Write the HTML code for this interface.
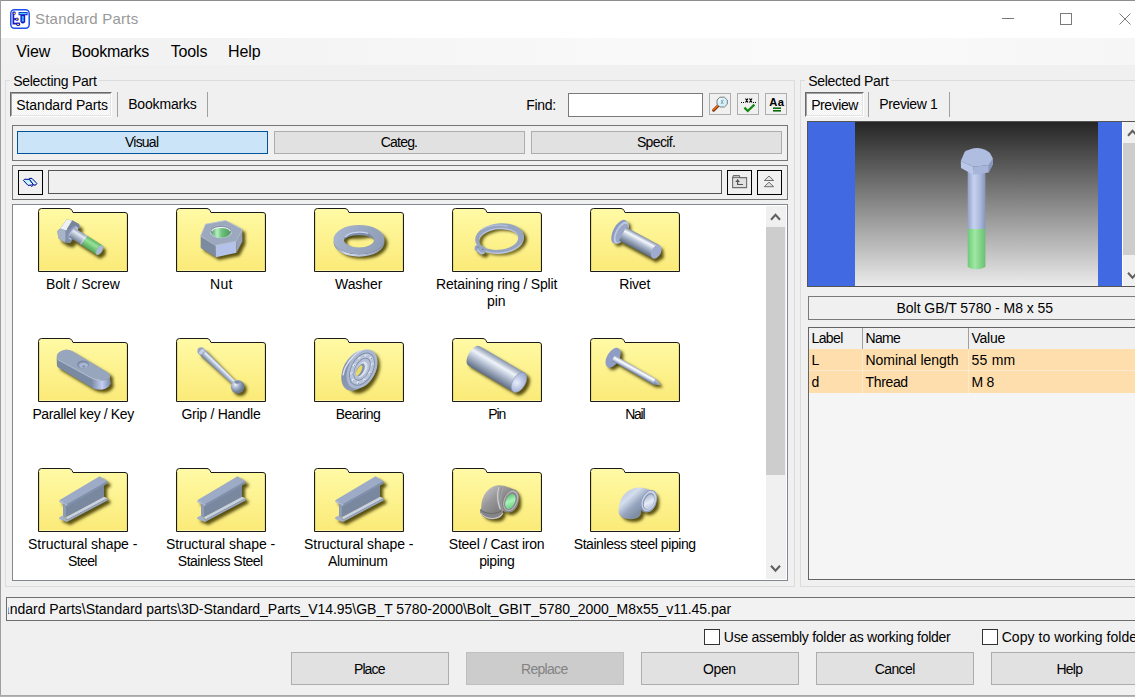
<!DOCTYPE html>
<html><head><meta charset="utf-8"><title>Standard Parts</title>
<style>
html,body{margin:0;padding:0;background:#f0f0f0;overflow:hidden}
body{font-family:"Liberation Sans",sans-serif;width:1135px;height:697px;position:relative}
#w{position:absolute;left:0;top:0;width:1135px;height:697px;overflow:hidden;background:#f0f0f0}
#w div,#w span,#w svg{position:absolute;box-sizing:border-box}
#w span{white-space:pre}

</style></head>
<body>
<div id="w">
<div style="left:0px;top:0px;width:1135px;height:38px;background:#fff"></div>
<div style="left:0px;top:38px;width:1135px;height:27px;background:linear-gradient(90deg,#f1f1f1 0%,#f3f3f3 20%,#f9f9f9 55%,#fafafa 75%,#f6f6f6 100%)"></div>
<div style="left:0px;top:0px;width:1135px;height:1px;background:#8e8e8e"></div>
<div style="left:0px;top:0px;width:1px;height:697px;background:#9e9e9e"></div>
<div style="left:0px;top:695px;width:1135px;height:1px;background:#a8a8a8"></div>
<div style="left:0px;top:696px;width:1135px;height:1px;background:#b4b4b4"></div>
<div style="left:1002px;top:18px;width:12px;height:1px;background:#7a7a7a"></div>
<div style="left:1060px;top:13px;width:12px;height:12px;border:1px solid #7a7a7a"></div>
<svg style="left:1118px;top:12px" width="14" height="14" viewBox="0 0 14 14"><path d="M1.5 1.5 L12.5 12.5 M12.5 1.5 L1.5 12.5" stroke="#7a7a7a" stroke-width="1" fill="none"/></svg>
<div style="left:5px;top:80px;width:790px;height:507px;border:1px solid #dcdcdc"></div>
<div style="left:10px;top:72px;width:89px;height:16px;background:#f0f0f0"></div>
<div style="left:800px;top:80px;width:345px;height:507px;border:1px solid #dcdcdc"></div>
<div style="left:805px;top:72px;width:86px;height:16px;background:#f0f0f0"></div>
<div style="left:10px;top:92px;width:102px;height:25px;border:1px solid;border-color:#696969 #fff #fff #696969;background:repeating-conic-gradient(#ffffff 0% 25%,#f0f0f0 0% 50%) 0 0/2px 2px"></div>
<div style="left:11px;top:93px;width:100px;height:23px;border:1px solid;border-color:#a0a0a0 #e3e3e3 #e3e3e3 #a0a0a0"></div>
<div style="left:117px;top:92px;width:1px;height:25px;background:#a0a0a0"></div>
<div style="left:207px;top:92px;width:1px;height:25px;background:#a0a0a0"></div>
<div style="left:568px;top:93px;width:135px;height:24px;border:1px solid #7a7a7a;background:#fff"></div>
<div style="left:709px;top:93px;width:22px;height:22px;border:1px solid #adadad;background:#f0f0f0"></div>
<div style="left:737px;top:93px;width:22px;height:22px;border:1px solid #adadad;background:#f0f0f0"></div>
<div style="left:765px;top:93px;width:22px;height:22px;border:1px solid #adadad;background:#f0f0f0"></div>
<div style="left:12px;top:125px;width:776px;height:36px;border:1px solid #767676"></div>
<div style="left:17px;top:131px;width:251px;height:23px;border:1px solid #005499;background:#cce4f7"></div>
<div style="left:274px;top:131px;width:251px;height:23px;border:1px solid #adadad;background:#e1e1e1"></div>
<div style="left:531px;top:131px;width:251px;height:23px;border:1px solid #adadad;background:#e1e1e1"></div>
<div style="left:12px;top:165px;width:776px;height:35px;border:1px solid #767676"></div>
<div style="left:18px;top:170px;width:25px;height:25px;border:1px solid #000"></div>
<div style="left:48px;top:170px;width:674px;height:24px;border:1px solid #555"></div>
<div style="left:727px;top:170px;width:25px;height:25px;border:1px solid #000"></div>
<div style="left:757px;top:170px;width:25px;height:25px;border:1px solid #000"></div>
<div style="left:12px;top:204px;width:776px;height:377px;border:1px solid #828790;background:#fff"></div>
<div style="left:766px;top:206px;width:20px;height:373px;background:#f0f0f0"></div>
<div style="left:766px;top:227px;width:19px;height:248px;background:#cdcdcd"></div>
<svg style="left:766px;top:206px" width="20" height="21" viewBox="0 0 20 21"><path d="M5 13.7 L9.5 8.8 L14 13.7" stroke="#606060" stroke-width="2.1" fill="none"/></svg>
<svg style="left:766px;top:558px" width="20" height="21" viewBox="0 0 20 21"><path d="M5 7.8 L9.5 12.7 L14 7.8" stroke="#606060" stroke-width="2.1" fill="none"/></svg>
<svg style="left:0;top:0" width="0" height="0"><defs><filter id="shd" x="-30%" y="-30%" width="160%" height="160%"><feGaussianBlur stdDeviation="17"/></filter><linearGradient id="fg" x1="0" y1="0" x2="0" y2="1"><stop offset="0" stop-color="#fffaa6"/><stop offset="0.5" stop-color="#fdf28e"/><stop offset="1" stop-color="#fbea78"/></linearGradient></defs></svg>
<svg style="left:37px;top:207px" width="92" height="66" viewBox="0 0 92 66"><path d="M1.5 64.5 L1.5 4.5 Q1.5 1.5 4.5 1.5 L32 1.5 Q34 1.5 35 3.5 L36 5.5 L88 5.5 Q90.5 5.5 90.5 8 L90.5 64.5 Z" fill="url(#fg)" stroke="#1a1a1a" stroke-width="1"/><path d="M2.5 63 V5" stroke="#d9c95a" stroke-opacity="0.55" fill="none"/><path d="M89.5 63 V8" stroke="#d9c95a" stroke-opacity="0.45" fill="none"/><path d="M3 63.5 H89" stroke="#fff8b0" stroke-opacity="0.8" fill="none"/><g transform="translate(-1 -3) scale(0.10334)"><defs><linearGradient id="b1" gradientUnits="userSpaceOnUse" x1="373" y1="231" x2="317" y2="319"><stop offset="0" stop-color="#8e9cb4"/><stop offset="0.3" stop-color="#e4ebf4"/><stop offset="0.45" stop-color="#c3cede"/><stop offset="1" stop-color="#6f7d93"/></linearGradient><linearGradient id="b2" gradientUnits="userSpaceOnUse" x1="373" y1="231" x2="317" y2="319"><stop offset="0" stop-color="#62b866"/><stop offset="0.35" stop-color="#96e29a"/><stop offset="1" stop-color="#4fa455"/></linearGradient></defs><path d="M207 262 L235 235 L297 149 L350 158 L418 195 L420 235 L395 255 L350 300 L355 345 L330 380 L275 372 L215 330 Z M373 231 L643 401 L637 459 L587 489 L317 319 Z" transform="translate(34 40)" fill="#453b00" fill-opacity="0.88" filter="url(#shd)"/><path d="M207 262 L235 235 L297 149 L350 158 L418 195 L420 235 L395 255 L350 300 L355 345 L330 380 L275 372 L215 330 Z" fill="#7f8da6"/><path d="M207 262 L235 238 L285 262 L285 345 L275 372 L215 330 Z" fill="#a7b3c6"/><path d="M235 238 L297 150 L352 160 L292 256 Z" fill="#eef2f6"/><path d="M352 160 L418 195 L420 235 L395 255 L300 240 Z" fill="#76849c"/><ellipse cx="350" cy="275" rx="34" ry="80" transform="rotate(32.2 350 275)" fill="#8794b6"/><ellipse cx="362" cy="282" rx="30" ry="70" transform="rotate(32.2 362 282)" fill="#b9c4dc"/><path d="M373 231 L643 401 L587 489 L317 319 Z" fill="url(#b1)"/><path d="M506 315 L643 401 L587 489 L450 403 A14 52 32.1 0 1 506 315 Z" fill="url(#b2)"/><path d="M486 303 L430 391" stroke="#e6ecf4" stroke-width="12" stroke-opacity="0.45"/><ellipse cx="615" cy="445" rx="26" ry="52" transform="rotate(32.2 615 445)" fill="#aeb9d8" stroke="#7fbf86" stroke-width="6"/></g></svg>
<svg style="left:175px;top:207px" width="92" height="66" viewBox="0 0 92 66"><path d="M1.5 64.5 L1.5 4.5 Q1.5 1.5 4.5 1.5 L32 1.5 Q34 1.5 35 3.5 L36 5.5 L88 5.5 Q90.5 5.5 90.5 8 L90.5 64.5 Z" fill="url(#fg)" stroke="#1a1a1a" stroke-width="1"/><path d="M2.5 63 V5" stroke="#d9c95a" stroke-opacity="0.55" fill="none"/><path d="M89.5 63 V8" stroke="#d9c95a" stroke-opacity="0.45" fill="none"/><path d="M3 63.5 H89" stroke="#fff8b0" stroke-opacity="0.8" fill="none"/><g transform="translate(-1 -3) scale(0.10334)"><defs><linearGradient id="n1" gradientUnits="userSpaceOnUse" x1="360" y1="280" x2="550" y2="280"><stop offset="0" stop-color="#4f9a5e"/><stop offset="0.3" stop-color="#b6f0c0"/><stop offset="0.55" stop-color="#6cc07c"/><stop offset="1" stop-color="#4f9a5e"/></linearGradient></defs><path d="M305 195 L500 160 L660 245 L662 360 L605 472 L405 515 L258 425 L258 310 Z" transform="translate(30 28)" fill="#453b00" fill-opacity="0.88" filter="url(#shd)"/><path d="M305 195 L500 160 L660 245 L600 360 L400 400 L258 310 Z" fill="#9ba8bd"/><path d="M258 310 L400 400 L405 515 L258 425 Z" fill="#7d8ba0"/><path d="M400 400 L600 360 L605 472 L405 515 Z" fill="#b4c1e8"/><path d="M600 360 L660 245 L662 360 L605 472 Z" fill="#95a2ba"/><path d="M305 195 L500 160 L660 245 L600 360 L400 400 L258 310 Z" fill="none" stroke="#b8c3d6" stroke-width="8"/><ellipse cx="455" cy="268" rx="108" ry="64" fill="#c9d1de"/><ellipse cx="455" cy="262" rx="104" ry="56" fill="#8794aa"/><ellipse cx="455" cy="276" rx="90" ry="50" fill="url(#n1)"/><path d="M365 262 A 92 44 0 0 1 545 262" fill="none" stroke="#f4f7fa" stroke-width="10"/></g></svg>
<svg style="left:313px;top:207px" width="92" height="66" viewBox="0 0 92 66"><path d="M1.5 64.5 L1.5 4.5 Q1.5 1.5 4.5 1.5 L32 1.5 Q34 1.5 35 3.5 L36 5.5 L88 5.5 Q90.5 5.5 90.5 8 L90.5 64.5 Z" fill="url(#fg)" stroke="#1a1a1a" stroke-width="1"/><path d="M2.5 63 V5" stroke="#d9c95a" stroke-opacity="0.55" fill="none"/><path d="M89.5 63 V8" stroke="#d9c95a" stroke-opacity="0.45" fill="none"/><path d="M3 63.5 H89" stroke="#fff8b0" stroke-opacity="0.8" fill="none"/><g transform="translate(-1 -3) scale(0.10334)"><defs><linearGradient id="w1" gradientUnits="userSpaceOnUse" x1="208" y1="0" x2="702" y2="0"><stop offset="0" stop-color="#7f8da6"/><stop offset="0.25" stop-color="#d3dcf2"/><stop offset="0.6" stop-color="#b1bedc"/><stop offset="1" stop-color="#8896b0"/></linearGradient><linearGradient id="w2" gradientUnits="userSpaceOnUse" x1="208" y1="250" x2="702" y2="450"><stop offset="0" stop-color="#a9b6d0"/><stop offset="0.5" stop-color="#99a7c0"/><stop offset="1" stop-color="#8e9cb6"/></linearGradient></defs><path d="M208 355 A247 148 0 1 1 702 355 A247 148 0 1 1 208 355 Z M310 350 A145 72 0 1 0 600 350 A145 72 0 1 0 310 350 Z" transform="translate(30 28)" fill="#453b00" fill-opacity="0.88" fill-rule="evenodd" filter="url(#shd)"/><clipPath id="whc"><ellipse cx="455" cy="348" rx="145" ry="72"/></clipPath><g clip-path="url(#whc)"><ellipse cx="440" cy="290" rx="170" ry="50" fill="#3a3100" fill-opacity="0.75" filter="url(#shd)"/></g><path d="M208 345 A247 142 0 1 0 702 345 L702 368 A247 142 0 0 1 208 368 Z" fill="url(#w1)"/><path d="M208 345 A247 142 0 1 1 702 345 A247 142 0 1 1 208 345 Z M310 348 A145 72 0 1 0 600 348 A145 72 0 1 0 310 348 Z" fill="url(#w2)" fill-rule="evenodd"/><path d="M310 348 A145 72 0 0 1 600 348 A150 62 0 0 0 310 348 Z" fill="#7f8ea8"/><path d="M322 322 A140 62 0 0 1 540 284" fill="none" stroke="#c9d4f0" stroke-width="12"/></g></svg>
<svg style="left:451px;top:207px" width="92" height="66" viewBox="0 0 92 66"><path d="M1.5 64.5 L1.5 4.5 Q1.5 1.5 4.5 1.5 L32 1.5 Q34 1.5 35 3.5 L36 5.5 L88 5.5 Q90.5 5.5 90.5 8 L90.5 64.5 Z" fill="url(#fg)" stroke="#1a1a1a" stroke-width="1"/><path d="M2.5 63 V5" stroke="#d9c95a" stroke-opacity="0.55" fill="none"/><path d="M89.5 63 V8" stroke="#d9c95a" stroke-opacity="0.45" fill="none"/><path d="M3 63.5 H89" stroke="#fff8b0" stroke-opacity="0.8" fill="none"/><g transform="translate(-1 -3) scale(0.10334)"><path d="M245 335 A235 140 -5 1 1 715 320 A235 140 -5 1 1 245 335 Z M282 345 A190 100 -5 1 0 660 330 A190 100 -5 1 0 282 345 Z M240 420 Q235 400 262 398 L300 405 L345 420 L350 455 L330 485 L300 490 L262 462 L238 445 Z" transform="translate(30 28)" fill="#453b00" fill-opacity="0.88" fill-rule="evenodd" filter="url(#shd)"/><path d="M245 335 A235 140 -5 1 1 715 320 A235 140 -5 1 1 245 335 Z M282 345 A190 100 -5 1 0 660 330 A190 100 -5 1 0 282 345 Z" transform="translate(0 14)" fill="#b7c4e4" fill-rule="evenodd"/><path d="M245 335 A235 140 -5 1 1 715 320 A235 140 -5 1 1 245 335 Z M282 345 A190 100 -5 1 0 660 330 A190 100 -5 1 0 282 345 Z" fill="#97a5bf" fill-rule="evenodd"/><path d="M240 420 Q235 400 262 398 L300 405 L345 420 L350 455 L330 485 L300 490 L262 462 L238 445 Z" fill="#97a5bf"/><path d="M262 440 L300 478 L330 472" fill="none" stroke="#b7c4e4" stroke-width="12"/><path d="M300 250 A200 110 -5 0 1 560 215" fill="none" stroke="#c4cfea" stroke-width="8"/><circle cx="272" cy="418" r="7" fill="#6f7c94"/><circle cx="318" cy="440" r="7" fill="#6f7c94"/></g></svg>
<svg style="left:589px;top:207px" width="92" height="66" viewBox="0 0 92 66"><path d="M1.5 64.5 L1.5 4.5 Q1.5 1.5 4.5 1.5 L32 1.5 Q34 1.5 35 3.5 L36 5.5 L88 5.5 Q90.5 5.5 90.5 8 L90.5 64.5 Z" fill="url(#fg)" stroke="#1a1a1a" stroke-width="1"/><path d="M2.5 63 V5" stroke="#d9c95a" stroke-opacity="0.55" fill="none"/><path d="M89.5 63 V8" stroke="#d9c95a" stroke-opacity="0.45" fill="none"/><path d="M3 63.5 H89" stroke="#fff8b0" stroke-opacity="0.8" fill="none"/><g transform="translate(-1 -3) scale(0.10334)"><defs><linearGradient id="r1" gradientUnits="userSpaceOnUse" x1="369" y1="226" x2="301" y2="354"><stop offset="0" stop-color="#7f8da6"/><stop offset="0.25" stop-color="#f6f9fd"/><stop offset="0.5" stop-color="#b6c2d6"/><stop offset="1" stop-color="#5d6b82"/></linearGradient></defs><path d="M369 226 L694 398 L700 483 L626 526 L301 354 Z" transform="translate(34 40)" fill="#453b00" fill-opacity="0.88" filter="url(#shd)"/><ellipse cx="338" cy="296" rx="62" ry="125" transform="rotate(27.9 338 296)" fill="#453b00" fill-opacity="0.88" filter="url(#shd)"/><ellipse cx="305" cy="268" rx="62" ry="125" transform="rotate(27.9 305 268)" fill="#8d9bc0"/><ellipse cx="322" cy="278" rx="55" ry="118" transform="rotate(27.9 322 278)" fill="#bdc8e4"/><ellipse cx="330" cy="283" rx="48" ry="100" transform="rotate(27.9 330 283)" fill="#9aa7c6"/><path d="M369 226 L694 398 L626 526 L301 354 Z" fill="url(#r1)"/><ellipse cx="660" cy="462" rx="45" ry="72" transform="rotate(27.9 660 462)" fill="#9fabd0"/></g></svg>
<svg style="left:37px;top:337px" width="92" height="66" viewBox="0 0 92 66"><path d="M1.5 64.5 L1.5 4.5 Q1.5 1.5 4.5 1.5 L32 1.5 Q34 1.5 35 3.5 L36 5.5 L88 5.5 Q90.5 5.5 90.5 8 L90.5 64.5 Z" fill="url(#fg)" stroke="#1a1a1a" stroke-width="1"/><path d="M2.5 63 V5" stroke="#d9c95a" stroke-opacity="0.55" fill="none"/><path d="M89.5 63 V8" stroke="#d9c95a" stroke-opacity="0.45" fill="none"/><path d="M3 63.5 H89" stroke="#fff8b0" stroke-opacity="0.8" fill="none"/><g transform="translate(-1 -3) scale(0.10334)"><defs><linearGradient id="k1" gradientUnits="userSpaceOnUse" x1="540" y1="0" x2="722" y2="0"><stop offset="0" stop-color="#7d8ca6"/><stop offset="0.55" stop-color="#c3d0f4"/><stop offset="0.8" stop-color="#9aa8cc"/><stop offset="1" stop-color="#7686a2"/></linearGradient></defs><path d="M200 215 Q205 165 290 150 Q330 150 350 165 L700 375 Q725 395 715 425 L722 480 Q700 530 640 537 Q580 540 545 522 L215 325 Q200 315 202 295 Z" transform="translate(30 28)" fill="#453b00" fill-opacity="0.88" filter="url(#shd)"/><path d="M200 215 Q198 238 215 250 L540 428 Q560 440 620 447 Q690 450 715 425 L722 480 Q700 530 640 537 Q580 540 545 522 L215 325 Q200 315 202 295 Z" fill="#7b8aa3"/><path d="M540 428 Q560 440 620 447 Q690 450 715 425 L722 480 Q700 530 640 537 Q580 540 545 522 Z" fill="url(#k1)"/><path d="M200 215 Q205 165 290 150 Q330 150 350 165 L700 375 Q725 395 715 425 Q690 450 620 447 Q560 440 540 428 L215 250 Q198 238 200 215 Z" fill="#97a5bd"/><path d="M215 250 L540 428 Q560 440 620 447" fill="none" stroke="#c9d3e6" stroke-width="7"/><ellipse cx="455" cy="297" rx="58" ry="38" fill="#8492ac"/><ellipse cx="460" cy="305" rx="42" ry="26" fill="#a9b6d4"/><path d="M400 290 A58 38 0 0 1 510 285" fill="none" stroke="#6f7d96" stroke-width="6"/><ellipse cx="462" cy="315" rx="16" ry="9" fill="#7f8da8"/></g></svg>
<svg style="left:175px;top:337px" width="92" height="66" viewBox="0 0 92 66"><path d="M1.5 64.5 L1.5 4.5 Q1.5 1.5 4.5 1.5 L32 1.5 Q34 1.5 35 3.5 L36 5.5 L88 5.5 Q90.5 5.5 90.5 8 L90.5 64.5 Z" fill="url(#fg)" stroke="#1a1a1a" stroke-width="1"/><path d="M2.5 63 V5" stroke="#d9c95a" stroke-opacity="0.55" fill="none"/><path d="M89.5 63 V8" stroke="#d9c95a" stroke-opacity="0.45" fill="none"/><path d="M3 63.5 H89" stroke="#fff8b0" stroke-opacity="0.8" fill="none"/><g transform="translate(-1 -3) scale(0.10334)"><defs><linearGradient id="h1" gradientUnits="userSpaceOnUse" x1="287" y1="139" x2="237" y2="191"><stop offset="0" stop-color="#7f8da6"/><stop offset="0.3" stop-color="#e9f0fa"/><stop offset="0.55" stop-color="#b3bfd4"/><stop offset="1" stop-color="#69778e"/></linearGradient><radialGradient id="h2" gradientUnits="userSpaceOnUse" cx="595" cy="490" r="75" ><stop offset="0" stop-color="#eef3fb"/><stop offset="0.45" stop-color="#a9b6d0"/><stop offset="1" stop-color="#6d7b94"/></radialGradient></defs><path d="M287 139 L605 464 L575 496 L237 191 Z M680 510 A65 65 0 1 1 550 510 A65 65 0 1 1 680 510 Z" transform="translate(26 26)" fill="#453b00" fill-opacity="0.88" filter="url(#shd)"/><path d="M287 139 L605 464 L575 496 L237 191 Z" fill="url(#h1)"/><circle cx="262" cy="165" r="36" fill="#9aa7c0"/><ellipse cx="268" cy="171" rx="16" ry="34" transform="rotate(43.8 268 171)" fill="#c5d0e4"/><circle cx="615" cy="510" r="66" fill="url(#h2)"/><ellipse cx="612" cy="468" rx="26" ry="14" fill="#7e8ca6"/></g></svg>
<svg style="left:313px;top:337px" width="92" height="66" viewBox="0 0 92 66"><path d="M1.5 64.5 L1.5 4.5 Q1.5 1.5 4.5 1.5 L32 1.5 Q34 1.5 35 3.5 L36 5.5 L88 5.5 Q90.5 5.5 90.5 8 L90.5 64.5 Z" fill="url(#fg)" stroke="#1a1a1a" stroke-width="1"/><path d="M2.5 63 V5" stroke="#d9c95a" stroke-opacity="0.55" fill="none"/><path d="M89.5 63 V8" stroke="#d9c95a" stroke-opacity="0.45" fill="none"/><path d="M3 63.5 H89" stroke="#fff8b0" stroke-opacity="0.8" fill="none"/><g transform="translate(-1 -3) scale(0.10334)"><defs><linearGradient id="be1" gradientUnits="userSpaceOnUse" x1="-210" y1="0" x2="210" y2="0"><stop offset="0" stop-color="#8c9ab4"/><stop offset="0.5" stop-color="#7d8ba5"/><stop offset="1" stop-color="#dfe6f2"/></linearGradient></defs><ellipse cx="470" cy="350" rx="215" ry="135" transform="translate(32 26) rotate(-62 470 350)" fill="#453b00" fill-opacity="0.88" filter="url(#shd)"/><ellipse cx="0" cy="0" rx="212" ry="134" transform="translate(438 352) rotate(-62)" fill="url(#be1)"/><path d="M300 400 Q330 230 520 150" fill="none" stroke="#e3e9f4" stroke-width="14" stroke-opacity="0.9"/><ellipse cx="484" cy="340" rx="204" ry="132" transform="rotate(-62 484 340)" fill="#aab7d0" /><ellipse cx="484" cy="340" rx="172" ry="108" transform="rotate(-62 484 340)" fill="#7f8da8" /><ellipse cx="484" cy="340" rx="162" ry="100" transform="rotate(-62 484 340)" fill="#b9c4da" /><ellipse cx="484" cy="340" rx="120" ry="70" transform="rotate(-62 484 340)" fill="#7a88a2" /><ellipse cx="484" cy="340" rx="112" ry="64" transform="rotate(-62 484 340)" fill="#b4bfd6" /><ellipse cx="482" cy="343" rx="82" ry="46" transform="rotate(-62 482 343)" fill="#d9e0ee" /><ellipse cx="468" cy="348" rx="68" ry="33" transform="rotate(-62 468 348)" fill="#8391ab" /><ellipse cx="456" cy="354" rx="56" ry="20" transform="rotate(-62 456 354)" fill="#e9da63" /><circle cx="569" cy="233" r="14" fill="#dfe6f2"/><circle cx="574" cy="238" r="7" fill="#8b99b3"/><circle cx="584" cy="297" r="14" fill="#dfe6f2"/><circle cx="589" cy="302" r="7" fill="#8b99b3"/><circle cx="560" cy="378" r="14" fill="#dfe6f2"/><circle cx="565" cy="383" r="7" fill="#8b99b3"/><circle cx="507" cy="444" r="14" fill="#dfe6f2"/><circle cx="512" cy="449" r="7" fill="#8b99b3"/><circle cx="446" cy="471" r="14" fill="#dfe6f2"/><circle cx="451" cy="476" r="7" fill="#8b99b3"/><circle cx="399" cy="447" r="14" fill="#dfe6f2"/><circle cx="404" cy="452" r="7" fill="#8b99b3"/><circle cx="384" cy="383" r="14" fill="#dfe6f2"/><circle cx="389" cy="388" r="7" fill="#8b99b3"/><circle cx="408" cy="302" r="14" fill="#dfe6f2"/><circle cx="413" cy="307" r="7" fill="#8b99b3"/><circle cx="461" cy="236" r="14" fill="#dfe6f2"/><circle cx="466" cy="241" r="7" fill="#8b99b3"/><circle cx="522" cy="209" r="14" fill="#dfe6f2"/><circle cx="527" cy="214" r="7" fill="#8b99b3"/></g></svg>
<svg style="left:451px;top:337px" width="92" height="66" viewBox="0 0 92 66"><path d="M1.5 64.5 L1.5 4.5 Q1.5 1.5 4.5 1.5 L32 1.5 Q34 1.5 35 3.5 L36 5.5 L88 5.5 Q90.5 5.5 90.5 8 L90.5 64.5 Z" fill="url(#fg)" stroke="#1a1a1a" stroke-width="1"/><path d="M2.5 63 V5" stroke="#d9c95a" stroke-opacity="0.55" fill="none"/><path d="M89.5 63 V8" stroke="#d9c95a" stroke-opacity="0.45" fill="none"/><path d="M3 63.5 H89" stroke="#fff8b0" stroke-opacity="0.8" fill="none"/><g transform="translate(-1 -3) scale(0.10334)"><defs><linearGradient id="p1" gradientUnits="userSpaceOnUse" x1="287" y1="119" x2="177" y2="305"><stop offset="0" stop-color="#8795ad"/><stop offset="0.3" stop-color="#f0f4fa"/><stop offset="0.55" stop-color="#b9c4d6"/><stop offset="1" stop-color="#5f6d84"/></linearGradient><radialGradient id="p2" gradientUnits="userSpaceOnUse" cx="650" cy="480" r="120" ><stop offset="0" stop-color="#e8eeff"/><stop offset="1" stop-color="#93a1c8"/></radialGradient></defs><path d="M287 119 L723 375 A60 108 30.4 0 1 613 561 L177 305 A60 108 30.4 0 1 287 119 Z" transform="translate(32 30)" fill="#453b00" fill-opacity="0.88" filter="url(#shd)"/><path d="M287 119 L723 375 L613 561 L177 305 A55 108 30.4 0 1 287 119 Z" fill="url(#p1)"/><ellipse cx="668" cy="468" rx="62" ry="108" transform="rotate(30.4 668 468)" fill="url(#p2)" stroke="#7e8caa" stroke-width="4"/></g></svg>
<svg style="left:589px;top:337px" width="92" height="66" viewBox="0 0 92 66"><path d="M1.5 64.5 L1.5 4.5 Q1.5 1.5 4.5 1.5 L32 1.5 Q34 1.5 35 3.5 L36 5.5 L88 5.5 Q90.5 5.5 90.5 8 L90.5 64.5 Z" fill="url(#fg)" stroke="#1a1a1a" stroke-width="1"/><path d="M2.5 63 V5" stroke="#d9c95a" stroke-opacity="0.55" fill="none"/><path d="M89.5 63 V8" stroke="#d9c95a" stroke-opacity="0.45" fill="none"/><path d="M3 63.5 H89" stroke="#fff8b0" stroke-opacity="0.8" fill="none"/><g transform="translate(-1 -3) scale(0.10334)"><defs><linearGradient id="na1" gradientUnits="userSpaceOnUse" x1="260" y1="205" x2="230" y2="259"><stop offset="0" stop-color="#95a3be"/><stop offset="0.4" stop-color="#ffffff"/><stop offset="0.7" stop-color="#c4cfe4"/><stop offset="1" stop-color="#7383a0"/></linearGradient></defs><path d="M260 205 L655 433 L698 490 L625 487 L230 259 Z" transform="translate(28 28)" fill="#453b00" fill-opacity="0.88" filter="url(#shd)"/><ellipse cx="270" cy="255" rx="60" ry="105" transform="rotate(30.0 270 255)" fill="#453b00" fill-opacity="0.88" filter="url(#shd)"/><ellipse cx="243" cy="230" rx="60" ry="105" transform="rotate(30.0 243 230)" fill="#8f9dc6"/><path d="M260 205 L655 433 L698 490 L625 487 L230 259 Z" fill="url(#na1)"/><path d="M655 433 L698 490 L625 487 Z" fill="#8595b8"/><path d="M655 433 L698 490 L640 460 Z" fill="#a9b6d6"/></g></svg>
<svg style="left:37px;top:467px" width="92" height="66" viewBox="0 0 92 66"><path d="M1.5 64.5 L1.5 4.5 Q1.5 1.5 4.5 1.5 L32 1.5 Q34 1.5 35 3.5 L36 5.5 L88 5.5 Q90.5 5.5 90.5 8 L90.5 64.5 Z" fill="url(#fg)" stroke="#1a1a1a" stroke-width="1"/><path d="M2.5 63 V5" stroke="#d9c95a" stroke-opacity="0.55" fill="none"/><path d="M89.5 63 V8" stroke="#d9c95a" stroke-opacity="0.45" fill="none"/><path d="M3 63.5 H89" stroke="#fff8b0" stroke-opacity="0.8" fill="none"/><g transform="translate(-1 -3) scale(0.10334)"><path d="M225 350 L615 118 L693 168 L693 188 L658 210 L658 310 L692 332 L692 352 L300 562 L225 532 L225 515 L262 500 L262 385 L225 368 Z" transform="translate(30 28)" fill="#453b00" fill-opacity="0.88" filter="url(#shd)"/><path d="M262 375 L658 185 L658 320 L290 514 L262 512 Z" fill="#7a889f"/><path d="M290 514 L658 318 L692 332 L300 540 Z" fill="#c9d2e2"/><path d="M225 515 L262 498 L300 540 L300 562 L225 532 Z" fill="#a3b1cc"/><path d="M300 540 L692 332 L692 352 L300 562 Z" fill="#98a6c0"/><path d="M225 350 L615 118 L693 168 L305 388 Z" fill="#9dabc6"/><path d="M225 350 L305 388 L305 408 L225 368 Z" fill="#aab8d6"/><path d="M305 388 L693 168 L693 188 L305 408 Z" fill="#8291ab"/><path d="M262 385 L290 400 L290 515 L262 500 Z" fill="#8e9cb6"/></g></svg>
<svg style="left:175px;top:467px" width="92" height="66" viewBox="0 0 92 66"><path d="M1.5 64.5 L1.5 4.5 Q1.5 1.5 4.5 1.5 L32 1.5 Q34 1.5 35 3.5 L36 5.5 L88 5.5 Q90.5 5.5 90.5 8 L90.5 64.5 Z" fill="url(#fg)" stroke="#1a1a1a" stroke-width="1"/><path d="M2.5 63 V5" stroke="#d9c95a" stroke-opacity="0.55" fill="none"/><path d="M89.5 63 V8" stroke="#d9c95a" stroke-opacity="0.45" fill="none"/><path d="M3 63.5 H89" stroke="#fff8b0" stroke-opacity="0.8" fill="none"/><g transform="translate(-1 -3) scale(0.10334)"><path d="M225 350 L615 118 L693 168 L693 188 L658 210 L658 310 L692 332 L692 352 L300 562 L225 532 L225 515 L262 500 L262 385 L225 368 Z" transform="translate(30 28)" fill="#453b00" fill-opacity="0.88" filter="url(#shd)"/><path d="M262 375 L658 185 L658 320 L290 514 L262 512 Z" fill="#7a889f"/><path d="M290 514 L658 318 L692 332 L300 540 Z" fill="#c9d2e2"/><path d="M225 515 L262 498 L300 540 L300 562 L225 532 Z" fill="#a3b1cc"/><path d="M300 540 L692 332 L692 352 L300 562 Z" fill="#98a6c0"/><path d="M225 350 L615 118 L693 168 L305 388 Z" fill="#9dabc6"/><path d="M225 350 L305 388 L305 408 L225 368 Z" fill="#aab8d6"/><path d="M305 388 L693 168 L693 188 L305 408 Z" fill="#8291ab"/><path d="M262 385 L290 400 L290 515 L262 500 Z" fill="#8e9cb6"/></g></svg>
<svg style="left:313px;top:467px" width="92" height="66" viewBox="0 0 92 66"><path d="M1.5 64.5 L1.5 4.5 Q1.5 1.5 4.5 1.5 L32 1.5 Q34 1.5 35 3.5 L36 5.5 L88 5.5 Q90.5 5.5 90.5 8 L90.5 64.5 Z" fill="url(#fg)" stroke="#1a1a1a" stroke-width="1"/><path d="M2.5 63 V5" stroke="#d9c95a" stroke-opacity="0.55" fill="none"/><path d="M89.5 63 V8" stroke="#d9c95a" stroke-opacity="0.45" fill="none"/><path d="M3 63.5 H89" stroke="#fff8b0" stroke-opacity="0.8" fill="none"/><g transform="translate(-1 -3) scale(0.10334)"><path d="M225 350 L615 118 L693 168 L693 188 L658 210 L658 310 L692 332 L692 352 L300 562 L225 532 L225 515 L262 500 L262 385 L225 368 Z" transform="translate(30 28)" fill="#453b00" fill-opacity="0.88" filter="url(#shd)"/><path d="M262 375 L658 185 L658 320 L290 514 L262 512 Z" fill="#7a889f"/><path d="M290 514 L658 318 L692 332 L300 540 Z" fill="#c9d2e2"/><path d="M225 515 L262 498 L300 540 L300 562 L225 532 Z" fill="#a3b1cc"/><path d="M300 540 L692 332 L692 352 L300 562 Z" fill="#98a6c0"/><path d="M225 350 L615 118 L693 168 L305 388 Z" fill="#9dabc6"/><path d="M225 350 L305 388 L305 408 L225 368 Z" fill="#aab8d6"/><path d="M305 388 L693 168 L693 188 L305 408 Z" fill="#8291ab"/><path d="M262 385 L290 400 L290 515 L262 500 Z" fill="#8e9cb6"/></g></svg>
<svg style="left:451px;top:467px" width="92" height="66" viewBox="0 0 92 66"><path d="M1.5 64.5 L1.5 4.5 Q1.5 1.5 4.5 1.5 L32 1.5 Q34 1.5 35 3.5 L36 5.5 L88 5.5 Q90.5 5.5 90.5 8 L90.5 64.5 Z" fill="url(#fg)" stroke="#1a1a1a" stroke-width="1"/><path d="M2.5 63 V5" stroke="#d9c95a" stroke-opacity="0.55" fill="none"/><path d="M89.5 63 V8" stroke="#d9c95a" stroke-opacity="0.45" fill="none"/><path d="M3 63.5 H89" stroke="#fff8b0" stroke-opacity="0.8" fill="none"/><g transform="translate(-1 -3) scale(0.10334)"><defs><linearGradient id="es1" gradientUnits="userSpaceOnUse" x1="320" y1="250" x2="560" y2="520"><stop offset="0" stop-color="#c4c4c6"/><stop offset="0.35" stop-color="#98989a"/><stop offset="0.7" stop-color="#7e7e80"/><stop offset="1" stop-color="#a2a2a4"/></linearGradient><linearGradient id="es2" gradientUnits="userSpaceOnUse" x1="520" y1="300" x2="640" y2="420"><stop offset="0" stop-color="#46b060"/><stop offset="0.5" stop-color="#a6f5b6"/><stop offset="1" stop-color="#5fca78"/></linearGradient></defs><path d="M300 450 Q300 330 350 270 Q410 200 480 205 Q560 210 640 265 Q670 310 655 400 Q620 470 560 470 Q520 465 505 440 Q520 500 470 525 Q400 545 330 510 Q290 480 300 450 Z" transform="translate(30 26)" fill="#453b00" fill-opacity="0.88" filter="url(#shd)"/><path d="M300 450 Q300 330 350 270 Q410 200 480 205 Q560 210 640 265 Q670 310 655 400 Q620 470 560 470 Q520 465 505 440 Q520 500 470 525 Q400 545 330 510 Q290 480 300 450 Z" fill="url(#es1)"/><path d="M293 432 Q300 468 400 478 Q480 478 508 436 L514 470 Q500 528 410 537 Q310 528 290 470 Z" fill="#858587"/><path d="M295 436 Q310 470 400 480 Q480 478 508 440" fill="none" stroke="#5e5e60" stroke-width="7"/><path d="M294 472 Q330 522 410 528 Q482 522 512 476" fill="none" stroke="#cfcfd1" stroke-width="10"/><path d="M462 212 Q430 320 476 440 L522 458 Q470 330 522 226 Z" fill="#a3a3a5"/><path d="M472 222 Q444 320 484 432" fill="none" stroke="#d6d6d8" stroke-width="9"/><path d="M500 226 Q462 330 506 446" fill="none" stroke="#7c7c7e" stroke-width="6"/><ellipse cx="588" cy="355" rx="76" ry="114" transform="rotate(22 588 355)" fill="#7e7e80"/><ellipse cx="588" cy="355" rx="68" ry="106" transform="rotate(22 588 355)" fill="#b4b4b7"/><ellipse cx="586" cy="358" rx="56" ry="92" transform="rotate(22 586 358)" fill="#8a8a8d"/><ellipse cx="584" cy="362" rx="44" ry="76" transform="rotate(22 584 362)" fill="url(#es2)"/></g></svg>
<svg style="left:589px;top:467px" width="92" height="66" viewBox="0 0 92 66"><path d="M1.5 64.5 L1.5 4.5 Q1.5 1.5 4.5 1.5 L32 1.5 Q34 1.5 35 3.5 L36 5.5 L88 5.5 Q90.5 5.5 90.5 8 L90.5 64.5 Z" fill="url(#fg)" stroke="#1a1a1a" stroke-width="1"/><path d="M2.5 63 V5" stroke="#d9c95a" stroke-opacity="0.55" fill="none"/><path d="M89.5 63 V8" stroke="#d9c95a" stroke-opacity="0.45" fill="none"/><path d="M3 63.5 H89" stroke="#fff8b0" stroke-opacity="0.8" fill="none"/><g transform="translate(-1 -3) scale(0.10334)"><defs><linearGradient id="ss1" gradientUnits="userSpaceOnUse" x1="320" y1="250" x2="560" y2="520"><stop offset="0" stop-color="#b4c0d8"/><stop offset="0.3" stop-color="#d4deee"/><stop offset="0.55" stop-color="#96a4bd"/><stop offset="0.8" stop-color="#7d8ba2"/><stop offset="1" stop-color="#aebbd4"/></linearGradient><linearGradient id="ss2" gradientUnits="userSpaceOnUse" x1="520" y1="300" x2="640" y2="420"><stop offset="0" stop-color="#9aa8c2"/><stop offset="0.6" stop-color="#e6edf9"/><stop offset="1" stop-color="#b4c1da"/></linearGradient></defs><path d="M296 455 Q296 345 360 285 Q420 228 500 228 Q575 232 645 275 Q670 315 655 400 Q620 470 560 470 Q528 466 512 446 Q524 500 470 525 Q400 548 330 515 Q288 485 296 455 Z" transform="translate(30 26)" fill="#453b00" fill-opacity="0.88" filter="url(#shd)"/><path d="M296 455 Q296 345 360 285 Q420 228 500 228 Q575 232 645 275 Q670 315 655 400 Q620 470 560 470 Q528 466 512 446 Q524 500 470 525 Q400 548 330 515 Q288 485 296 455 Z" fill="url(#ss1)"/><ellipse cx="590" cy="357" rx="74" ry="110" transform="rotate(22 590 357)" fill="#8e9cb8"/><ellipse cx="590" cy="357" rx="66" ry="102" transform="rotate(22 590 357)" fill="#c6d1e8"/><ellipse cx="587" cy="361" rx="50" ry="84" transform="rotate(22 587 361)" fill="#8492ae"/><ellipse cx="590" cy="366" rx="44" ry="76" transform="rotate(22 590 366)" fill="url(#ss2)"/></g></svg>
<div style="left:805px;top:92px;width:59px;height:25px;border:1px solid;border-color:#696969 #fff #fff #696969;background:repeating-conic-gradient(#ffffff 0% 25%,#f0f0f0 0% 50%) 0 0/2px 2px"></div>
<div style="left:806px;top:93px;width:57px;height:23px;border:1px solid;border-color:#a0a0a0 #e3e3e3 #e3e3e3 #a0a0a0"></div>
<div style="left:868px;top:92px;width:1px;height:25px;background:#a0a0a0"></div>
<div style="left:949px;top:92px;width:1px;height:25px;background:#a0a0a0"></div>
<div style="left:807px;top:121px;width:330px;height:166px;background:#fff;border:1px solid #555;border-right:none"></div>
<div style="left:808px;top:122px;width:47px;height:164px;background:#4169e1"></div>
<div style="left:855px;top:122px;width:243px;height:164px;background:linear-gradient(#252525,#ebebeb)"></div>
<div style="left:1098px;top:122px;width:24px;height:164px;background:#4169e1"></div>
<div style="left:1123px;top:122px;width:20px;height:164px;background:#f0f0f0"></div>
<div style="left:1123px;top:143px;width:20px;height:112px;background:#cdcdcd"></div>
<svg style="left:1123px;top:122px" width="20" height="21" viewBox="0 0 20 21"><path d="M5 13.7 L9.5 8.8 L14 13.7" stroke="#606060" stroke-width="2.1" fill="none"/></svg>
<svg style="left:1123px;top:265px" width="20" height="21" viewBox="0 0 20 21"><path d="M5 7.8 L9.5 12.7 L14 7.8" stroke="#606060" stroke-width="2.1" fill="none"/></svg>
<div style="left:808px;top:296px;width:340px;height:24px;border:1px solid #7a7a7a;background:#f0f0f0"></div>
<div style="left:808px;top:327px;width:340px;height:253px;border:1px solid #646464;background:#f5f5f5"></div>
<div style="left:809px;top:328px;width:339px;height:21px;background:#f0f0f0"></div>
<div style="left:862px;top:328px;width:1px;height:21px;background:#a0a0a0"></div>
<div style="left:968px;top:328px;width:1px;height:21px;background:#a0a0a0"></div>
<div style="left:809px;top:349px;width:339px;height:22px;background:#ffdead"></div>
<div style="left:809px;top:371px;width:339px;height:22px;background:#ffdead"></div>
<div style="left:809px;top:370px;width:339px;height:1px;background:#fbe9d0"></div>
<div style="left:862px;top:349px;width:1px;height:44px;background:#fbe9d0"></div>
<div style="left:968px;top:349px;width:1px;height:44px;background:#fbe9d0"></div>
<div style="left:6px;top:597px;width:1140px;height:24px;border:1px solid #6e6e6e;background:#f2f2f2"></div>
<div style="left:704px;top:629px;width:16px;height:16px;border:1px solid #333;background:#fff"></div>
<div style="left:982px;top:629px;width:16px;height:16px;border:1px solid #333;background:#fff"></div>
<div style="left:291px;top:652px;width:158px;height:33px;border:1px solid #adadad;background:#e1e1e1"></div>
<div style="left:466px;top:652px;width:158px;height:33px;border:1px solid #bfbfbf;background:#cccccc"></div>
<div style="left:641px;top:652px;width:158px;height:33px;border:1px solid #adadad;background:#e1e1e1"></div>
<div style="left:816px;top:652px;width:158px;height:33px;border:1px solid #adadad;background:#e1e1e1"></div>
<div style="left:991px;top:652px;width:158px;height:33px;border:1px solid #adadad;background:#e1e1e1"></div>
<svg style="left:10px;top:9px" width="20" height="20" viewBox="0 0 20 20"><rect x="0.8" y="0.8" width="18.4" height="18.4" rx="3.6" fill="#fff" stroke="#1c50f0" stroke-width="1.5"/><path d="M3.4 3.2 V14.6 H7.5 M3.4 10.2 H6.5" stroke="#1a1ac8" stroke-width="1.7" fill="none"/><rect x="5.2" y="8.8" width="3.4" height="3" rx="1.2" fill="#1a1ac8"/><rect x="6.2" y="13.6" width="4" height="3.4" rx="1.4" fill="#1a1ac8"/><rect x="2.6" y="2.6" width="3" height="3.2" rx="1" fill="#1a1ac8"/><rect x="3.6" y="3.8" width="1.4" height="1.2" fill="#ffe000"/><rect x="6" y="9.7" width="1.6" height="1.1" fill="#ffe000"/><rect x="7.2" y="14.8" width="1.8" height="1.2" fill="#ffe000"/><path d="M8.6 3 H17.6 V6.2 H15.2 V13 Q12.8 16 10.4 13 V6.2 H8.6 Z" fill="#1a1ac8"/><path d="M9.4 3.8 H16.8 V5.2 H9.4 Z" fill="#4fd8ff"/><path d="M11.6 7 H14 V12.8 H11.6 Z" fill="#2a7df0"/><path d="M12.2 7.6 H13.4 V9.2 H12.2 Z M12.2 10.2 H13.4 V11.8 H12.2 Z" fill="#4fd8ff"/></svg>
<svg style="left:709px;top:93px" width="22" height="22" viewBox="0 0 22 22"><path d="M4.6 17.2 L9.6 12.2" stroke="#7a2a00" stroke-width="3" stroke-linecap="round"/><path d="M4.6 16.8 L9.4 12" stroke="#e8741c" stroke-width="1.6" stroke-linecap="round"/><path d="M10.8 4.2 L15.4 4.2 L18.3 7 L18.3 11.2 L15.4 14 L10.8 14 L8 11.2 L8 7 Z" fill="#d4f2fb" stroke="#7d7d7d" stroke-width="1"/><path d="M11 5.4 L13.5 5.4 L10 9 L9.2 8 Z" fill="#fff" fill-opacity="0.9"/><path d="M12 6.8 L14.4 11 M14.4 6.8 L12 11" stroke="#8a9aa0" stroke-width="0.9" fill="none"/></svg>
<svg style="left:737px;top:93px" width="22" height="22" viewBox="0 0 22 22"><path d="M4 9.5 h1 M6 9.5 h1 M16 9.5 h1 M18 9.5 h1" stroke="#000" stroke-width="1"/><path d="M8.5 5.5 L11 9.5 M11 5.5 L8.5 9.5 M12.5 5.5 L15 9.5 M15 5.5 L12.5 9.5" stroke="#000" stroke-width="1.1" fill="none"/><path d="M7.4 14.6 L10.8 18 L17.4 11.6" stroke="#138a13" stroke-width="2.2" fill="none"/></svg>
<svg style="left:765px;top:93px" width="22" height="22" viewBox="0 0 22 22"><text x="4.2" y="12.9" font-family="Liberation Sans, sans-serif" font-weight="bold" font-size="11.2" letter-spacing="0.4" fill="#000">Aa</text><rect x="8" y="14.4" width="8" height="1.6" fill="#0a6a0a"/><rect x="8" y="17" width="8" height="1.6" fill="#0a6a0a"/></svg>
<svg style="left:18px;top:170px" width="25" height="25" viewBox="0 0 25 25"><defs><linearGradient id="ly" x1="0" y1="0" x2="1" y2="1"><stop offset="0" stop-color="#a8ecff"/><stop offset="1" stop-color="#eafaff"/></linearGradient></defs><path d="M5.4 10.4 L6.6 9.2 L11.6 9.4 L15.6 14.8 L10 15.4 Z" fill="url(#ly)" stroke="#00008b" stroke-width="1"/><path d="M11.4 8.4 L14 8.4 L18.8 13.4 L18 14.8 L15.8 15.2 L11.6 9.6 Z" fill="url(#ly)" stroke="#00008b" stroke-width="1"/><path d="M12.6 15.4 L13.4 16.4 L15.2 15.4" fill="#a8ecff" stroke="#00008b" stroke-width="0.9"/></svg>
<svg style="left:727px;top:170px" width="25" height="25" viewBox="0 0 25 25"><path d="M5.6 17.6 V7.4 L6.6 5.6 H12.2 L13 7.6 H19.6 V17.6 Z" fill="#e1e1e1" stroke="#6e6e6e" stroke-width="1.1"/><path d="M5.6 7.6 H13" stroke="#6e6e6e" stroke-width="1"/><path d="M10.6 9.6 V14.5 H16" stroke="#555" stroke-width="1.2" fill="none"/><path d="M8.2 12 L10.6 9.2 L13 12 Z" fill="#555"/></svg>
<svg style="left:757px;top:170px" width="25" height="25" viewBox="0 0 25 25"><path d="M7.3 10.5 L12 6 L16.7 10.5 Z" fill="#e1e1e1" stroke="#707070" stroke-width="1"/><path d="M7.3 16.7 L12 12.2 L16.7 16.7 Z" fill="#e1e1e1" stroke="#707070" stroke-width="1"/></svg>
<svg style="left:950px;top:140px" width="60" height="140" viewBox="0 0 60 140"><defs><linearGradient id="pb1" x1="0" y1="0" x2="1" y2="0"><stop offset="0" stop-color="#93a2c6"/><stop offset="0.35" stop-color="#c6d2f0"/><stop offset="0.7" stop-color="#aab8dc"/><stop offset="1" stop-color="#8795b8"/></linearGradient><linearGradient id="pb2" x1="0" y1="0" x2="1" y2="0"><stop offset="0" stop-color="#6fc878"/><stop offset="0.4" stop-color="#9ee8a4"/><stop offset="1" stop-color="#6abf73"/></linearGradient></defs><path d="M17.7 30 H35.4 V89.5 H17.7 Z" fill="url(#pb1)"/><path d="M17.7 89 H35.4 V127 Q26.5 131.5 17.7 127 Z" fill="url(#pb2)"/><path d="M10.8 21 L23.2 26.7 L23.2 34.7 L11 27.9 Z" fill="#bac7ea"/><path d="M23.2 26.7 L38.8 24.9 L38.8 32.4 L23.2 34.7 Z" fill="#a7b5da"/><path d="M38.8 24.9 L43 18.7 L43 24.4 L38.8 32.4 Z" fill="#8a98bc"/><path d="M14.7 11.8 Q20 8.2 27.4 7.9 Q35 8.5 40 12.9 L43 18.7 L38.8 24.9 L23.2 26.7 L10.8 21 Z" fill="#afbde0"/></svg>
<span style="left:34.90px;top:8px;font-size:15px;line-height:21px;height:21px;color:#999;letter-spacing:0.245px;">Standard Parts</span>
<span style="left:16.24px;top:41px;font-size:16px;line-height:21px;height:21px;color:#000;letter-spacing:-0.097px;">View</span>
<span style="left:71.54px;top:41px;font-size:16px;line-height:21px;height:21px;color:#000;letter-spacing:-0.279px;">Bookmarks</span>
<span style="left:170.64px;top:41px;font-size:16px;line-height:21px;height:21px;color:#000;letter-spacing:-0.140px;">Tools</span>
<span style="left:228.04px;top:41px;font-size:16px;line-height:21px;height:21px;color:#000;letter-spacing:-0.102px;">Help</span>
<span style="left:13.16px;top:71px;font-size:14px;line-height:20px;height:20px;color:#000;letter-spacing:-0.267px;">Selecting Part</span>
<span style="left:808.16px;top:71px;font-size:14px;line-height:20px;height:20px;color:#000;letter-spacing:-0.280px;">Selected Part</span>
<span style="left:16.36px;top:95px;font-size:14px;line-height:20px;height:20px;color:#000;letter-spacing:-0.130px;">Standard Parts</span>
<span style="left:128.16px;top:94px;font-size:14px;line-height:20px;height:20px;color:#000;letter-spacing:-0.166px;">Bookmarks</span>
<span style="left:526.16px;top:95px;font-size:14px;line-height:20px;height:20px;color:#000;letter-spacing:-0.256px;">Find:</span>
<span style="left:125.00px;top:132px;font-size:14px;line-height:20px;height:20px;color:#000;letter-spacing:-0.778px;">Visual</span>
<span style="left:380.80px;top:132px;font-size:14px;line-height:20px;height:20px;color:#000;letter-spacing:-0.810px;">Categ.</span>
<span style="left:636.95px;top:132px;font-size:14px;line-height:20px;height:20px;color:#000;letter-spacing:-0.652px;">Specif.</span>
<span style="left:46.05px;top:274px;font-size:14px;line-height:20px;height:20px;color:#000;letter-spacing:-0.091px;">Bolt / Screw</span>
<span style="left:209.90px;top:274px;font-size:14px;line-height:20px;height:20px;color:#000;letter-spacing:0.402px;">Nut</span>
<span style="left:335.10px;top:274px;font-size:14px;line-height:20px;height:20px;color:#000;letter-spacing:-0.104px;">Washer</span>
<span style="left:436.10px;top:274px;font-size:14px;line-height:20px;height:20px;color:#000;letter-spacing:-0.195px;">Retaining ring / Split</span>
<span style="left:487.10px;top:291px;font-size:14px;line-height:20px;height:20px;color:#000;letter-spacing:-0.144px;">pin</span>
<span style="left:619.25px;top:274px;font-size:14px;line-height:20px;height:20px;color:#000;letter-spacing:-0.202px;">Rivet</span>
<span style="left:32.40px;top:404px;font-size:14px;line-height:20px;height:20px;color:#000;letter-spacing:-0.375px;">Parallel key / Key</span>
<span style="left:181.45px;top:404px;font-size:14px;line-height:20px;height:20px;color:#000;letter-spacing:-0.265px;">Grip / Handle</span>
<span style="left:335.75px;top:404px;font-size:14px;line-height:20px;height:20px;color:#000;letter-spacing:-0.528px;">Bearing</span>
<span style="left:488.35px;top:404px;font-size:14px;line-height:20px;height:20px;color:#000;letter-spacing:-1.167px;">Pin</span>
<span style="left:625.30px;top:404px;font-size:14px;line-height:20px;height:20px;color:#000;letter-spacing:-1.308px;">Nail</span>
<span style="left:28.10px;top:534px;font-size:14px;line-height:20px;height:20px;color:#000;letter-spacing:-0.076px;">Structural shape -</span>
<span style="left:67.90px;top:551px;font-size:14px;line-height:20px;height:20px;color:#000;letter-spacing:-0.580px;">Steel</span>
<span style="left:166.00px;top:534px;font-size:14px;line-height:20px;height:20px;color:#000;letter-spacing:-0.076px;">Structural shape -</span>
<span style="left:177.85px;top:551px;font-size:14px;line-height:20px;height:20px;color:#000;letter-spacing:-0.522px;">Stainless Steel</span>
<span style="left:304.05px;top:534px;font-size:14px;line-height:20px;height:20px;color:#000;letter-spacing:-0.071px;">Structural shape -</span>
<span style="left:328.05px;top:551px;font-size:14px;line-height:20px;height:20px;color:#000;letter-spacing:-0.336px;">Aluminum</span>
<span style="left:448.80px;top:534px;font-size:14px;line-height:20px;height:20px;color:#000;letter-spacing:-0.238px;">Steel / Cast iron</span>
<span style="left:479.20px;top:551px;font-size:14px;line-height:20px;height:20px;color:#000;letter-spacing:-0.355px;">piping</span>
<span style="left:573.75px;top:534px;font-size:14px;line-height:20px;height:20px;color:#000;letter-spacing:-0.440px;">Stainless steel piping</span>
<span style="left:811.16px;top:95px;font-size:14px;line-height:20px;height:20px;color:#000;letter-spacing:-0.433px;">Preview</span>
<span style="left:879.16px;top:94px;font-size:14px;line-height:20px;height:20px;color:#000;letter-spacing:-0.346px;">Preview 1</span>
<span style="left:896.60px;top:298px;font-size:14px;line-height:20px;height:20px;color:#000;letter-spacing:-0.057px;">Bolt GB/T 5780 - M8 x 55</span>
<span style="left:811.56px;top:328px;font-size:14px;line-height:20px;height:20px;color:#000;letter-spacing:-0.641px;">Label</span>
<span style="left:865.46px;top:328px;font-size:14px;line-height:20px;height:20px;color:#000;letter-spacing:-0.653px;">Name</span>
<span style="left:971.56px;top:328px;font-size:14px;line-height:20px;height:20px;color:#000;letter-spacing:-0.270px;">Value</span>
<span style="left:811.56px;top:350px;font-size:14px;line-height:20px;height:20px;color:#000;">L</span>
<span style="left:865.46px;top:350px;font-size:14px;line-height:20px;height:20px;color:#000;letter-spacing:-0.030px;">Nominal length</span>
<span style="left:971.56px;top:350px;font-size:14px;line-height:20px;height:20px;color:#000;letter-spacing:0.226px;">55 mm</span>
<span style="left:811.56px;top:372px;font-size:14px;line-height:20px;height:20px;color:#000;">d</span>
<span style="left:865.46px;top:372px;font-size:14px;line-height:20px;height:20px;color:#000;letter-spacing:-0.332px;">Thread</span>
<span style="left:971.56px;top:372px;font-size:14px;line-height:20px;height:20px;color:#000;letter-spacing:-0.322px;">M 8</span>
<span style="left:9.76px;top:599px;font-size:14px;line-height:20px;height:20px;color:#000;letter-spacing:-0.027px;">ndard Parts\Standard parts\3D-Standard_Parts_V14.95\GB_T 5780-2000\Bolt_GBIT_5780_2000_M8x55_v11.45.par</span>
<span style="left:1.76px;top:599px;font-size:14px;line-height:20px;height:20px;color:#000;clip-path:inset(0 0 0 6.6px);">a</span>
<span style="left:723.86px;top:627px;font-size:14px;line-height:20px;height:20px;color:#000;letter-spacing:-0.268px;">Use assembly folder as working folder</span>
<span style="left:1001.66px;top:627px;font-size:14px;line-height:20px;height:20px;color:#000;letter-spacing:0.043px;">Copy to working folder</span>
<span style="left:353.95px;top:659px;font-size:14px;line-height:20px;height:20px;color:#000;letter-spacing:-0.883px;">Place</span>
<span style="left:521.00px;top:659px;font-size:14px;line-height:20px;height:20px;color:#838383;letter-spacing:-0.696px;">Replace</span>
<span style="left:703.05px;top:659px;font-size:14px;line-height:20px;height:20px;color:#000;letter-spacing:-0.383px;">Open</span>
<span style="left:874.70px;top:659px;font-size:14px;line-height:20px;height:20px;color:#000;letter-spacing:-0.599px;">Cancel</span>
<span style="left:1056.40px;top:659px;font-size:14px;line-height:20px;height:20px;color:#000;letter-spacing:-0.732px;">Help</span>
</div>
</body></html>
